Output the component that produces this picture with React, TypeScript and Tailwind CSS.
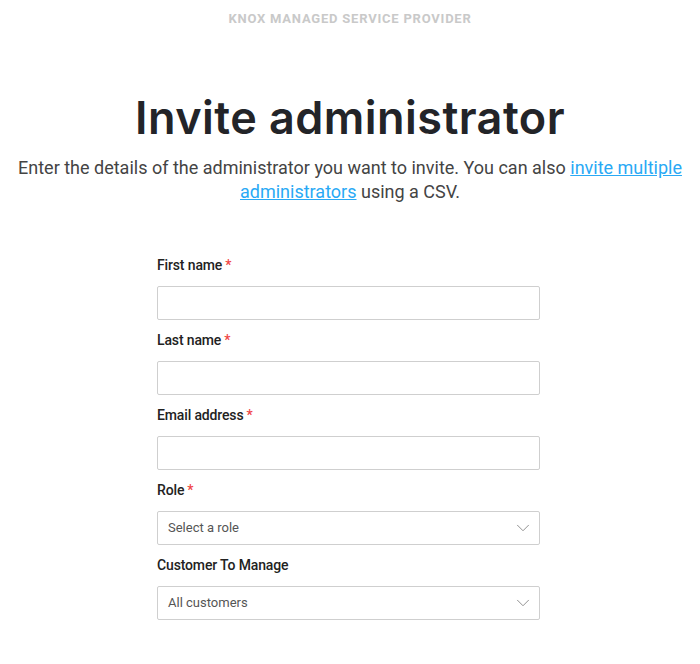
import React from 'react';
import { ChevronDown } from 'lucide-react';

interface FieldProps {
    label: string;
    required?: boolean;
    children: React.ReactNode;
}

const Field: React.FC<FieldProps> = ({ label, required, children }) => (
    <div className="flex flex-col">
        <label className="h-[20px] text-[14px] leading-[20px] font-medium tracking-[-0.01em] text-[#222]">
            {label}
            {required && <span className="ml-[3px] text-[#f04646]">*</span>}
        </label>
        <div className="mt-[11px]">{children}</div>
    </div>
);

const TextInput: React.FC = () => (
    <input
        type="text"
        className="block w-full h-[34px] border border-[#cfcfcf] rounded-[2px] bg-white px-[10px] text-[13px] outline-none"
    />
);

const SelectBox: React.FC<{ value: string }> = ({ value }) => (
    <div className="flex items-center justify-between w-full h-[34px] border border-[#cfcfcf] rounded-[2px] bg-white pl-[10px] pr-[5px]">
        <span className="text-[13px] text-[#555]">{value}</span>
        <ChevronDown size={22} strokeWidth={1} className="text-[#888]" />
    </div>
);

const App: React.FC = () => {
    return (
        <div className="w-[700px] min-h-[664px] bg-white font-['Roboto',sans-serif]">
            <div className="pt-[11px] text-center text-[13px] leading-[16px] font-bold tracking-[0.06em] text-[#c9c9c9]">
                KNOX MANAGED SERVICE PROVIDER
            </div>

            <h1 className="mt-[63px] text-center text-[45px] leading-[56px] font-semibold tracking-[0.01em] text-[#232428] font-['Inter',sans-serif]">
                Invite administrator
            </h1>

            <p className="mt-[10px] px-[8px] text-center text-[18px] leading-[24px] text-[#444]">
                Enter the details of the administrator you want to invite. You can also{' '}
                <a href="#" className="text-[#29a9f5] underline">invite multiple administrators</a>{' '}
                using a CSV.
            </p>

            <form className="ml-[157px] mt-[51px] w-[383px] flex flex-col gap-[10px]">
                <Field label="First name" required>
                    <TextInput />
                </Field>
                <Field label="Last name" required>
                    <TextInput />
                </Field>
                <Field label="Email address" required>
                    <TextInput />
                </Field>
                <Field label="Role" required>
                    <SelectBox value="Select a role" />
                </Field>
                <Field label="Customer To Manage">
                    <SelectBox value="All customers" />
                </Field>
            </form>
        </div>
    );
};

export default App;
